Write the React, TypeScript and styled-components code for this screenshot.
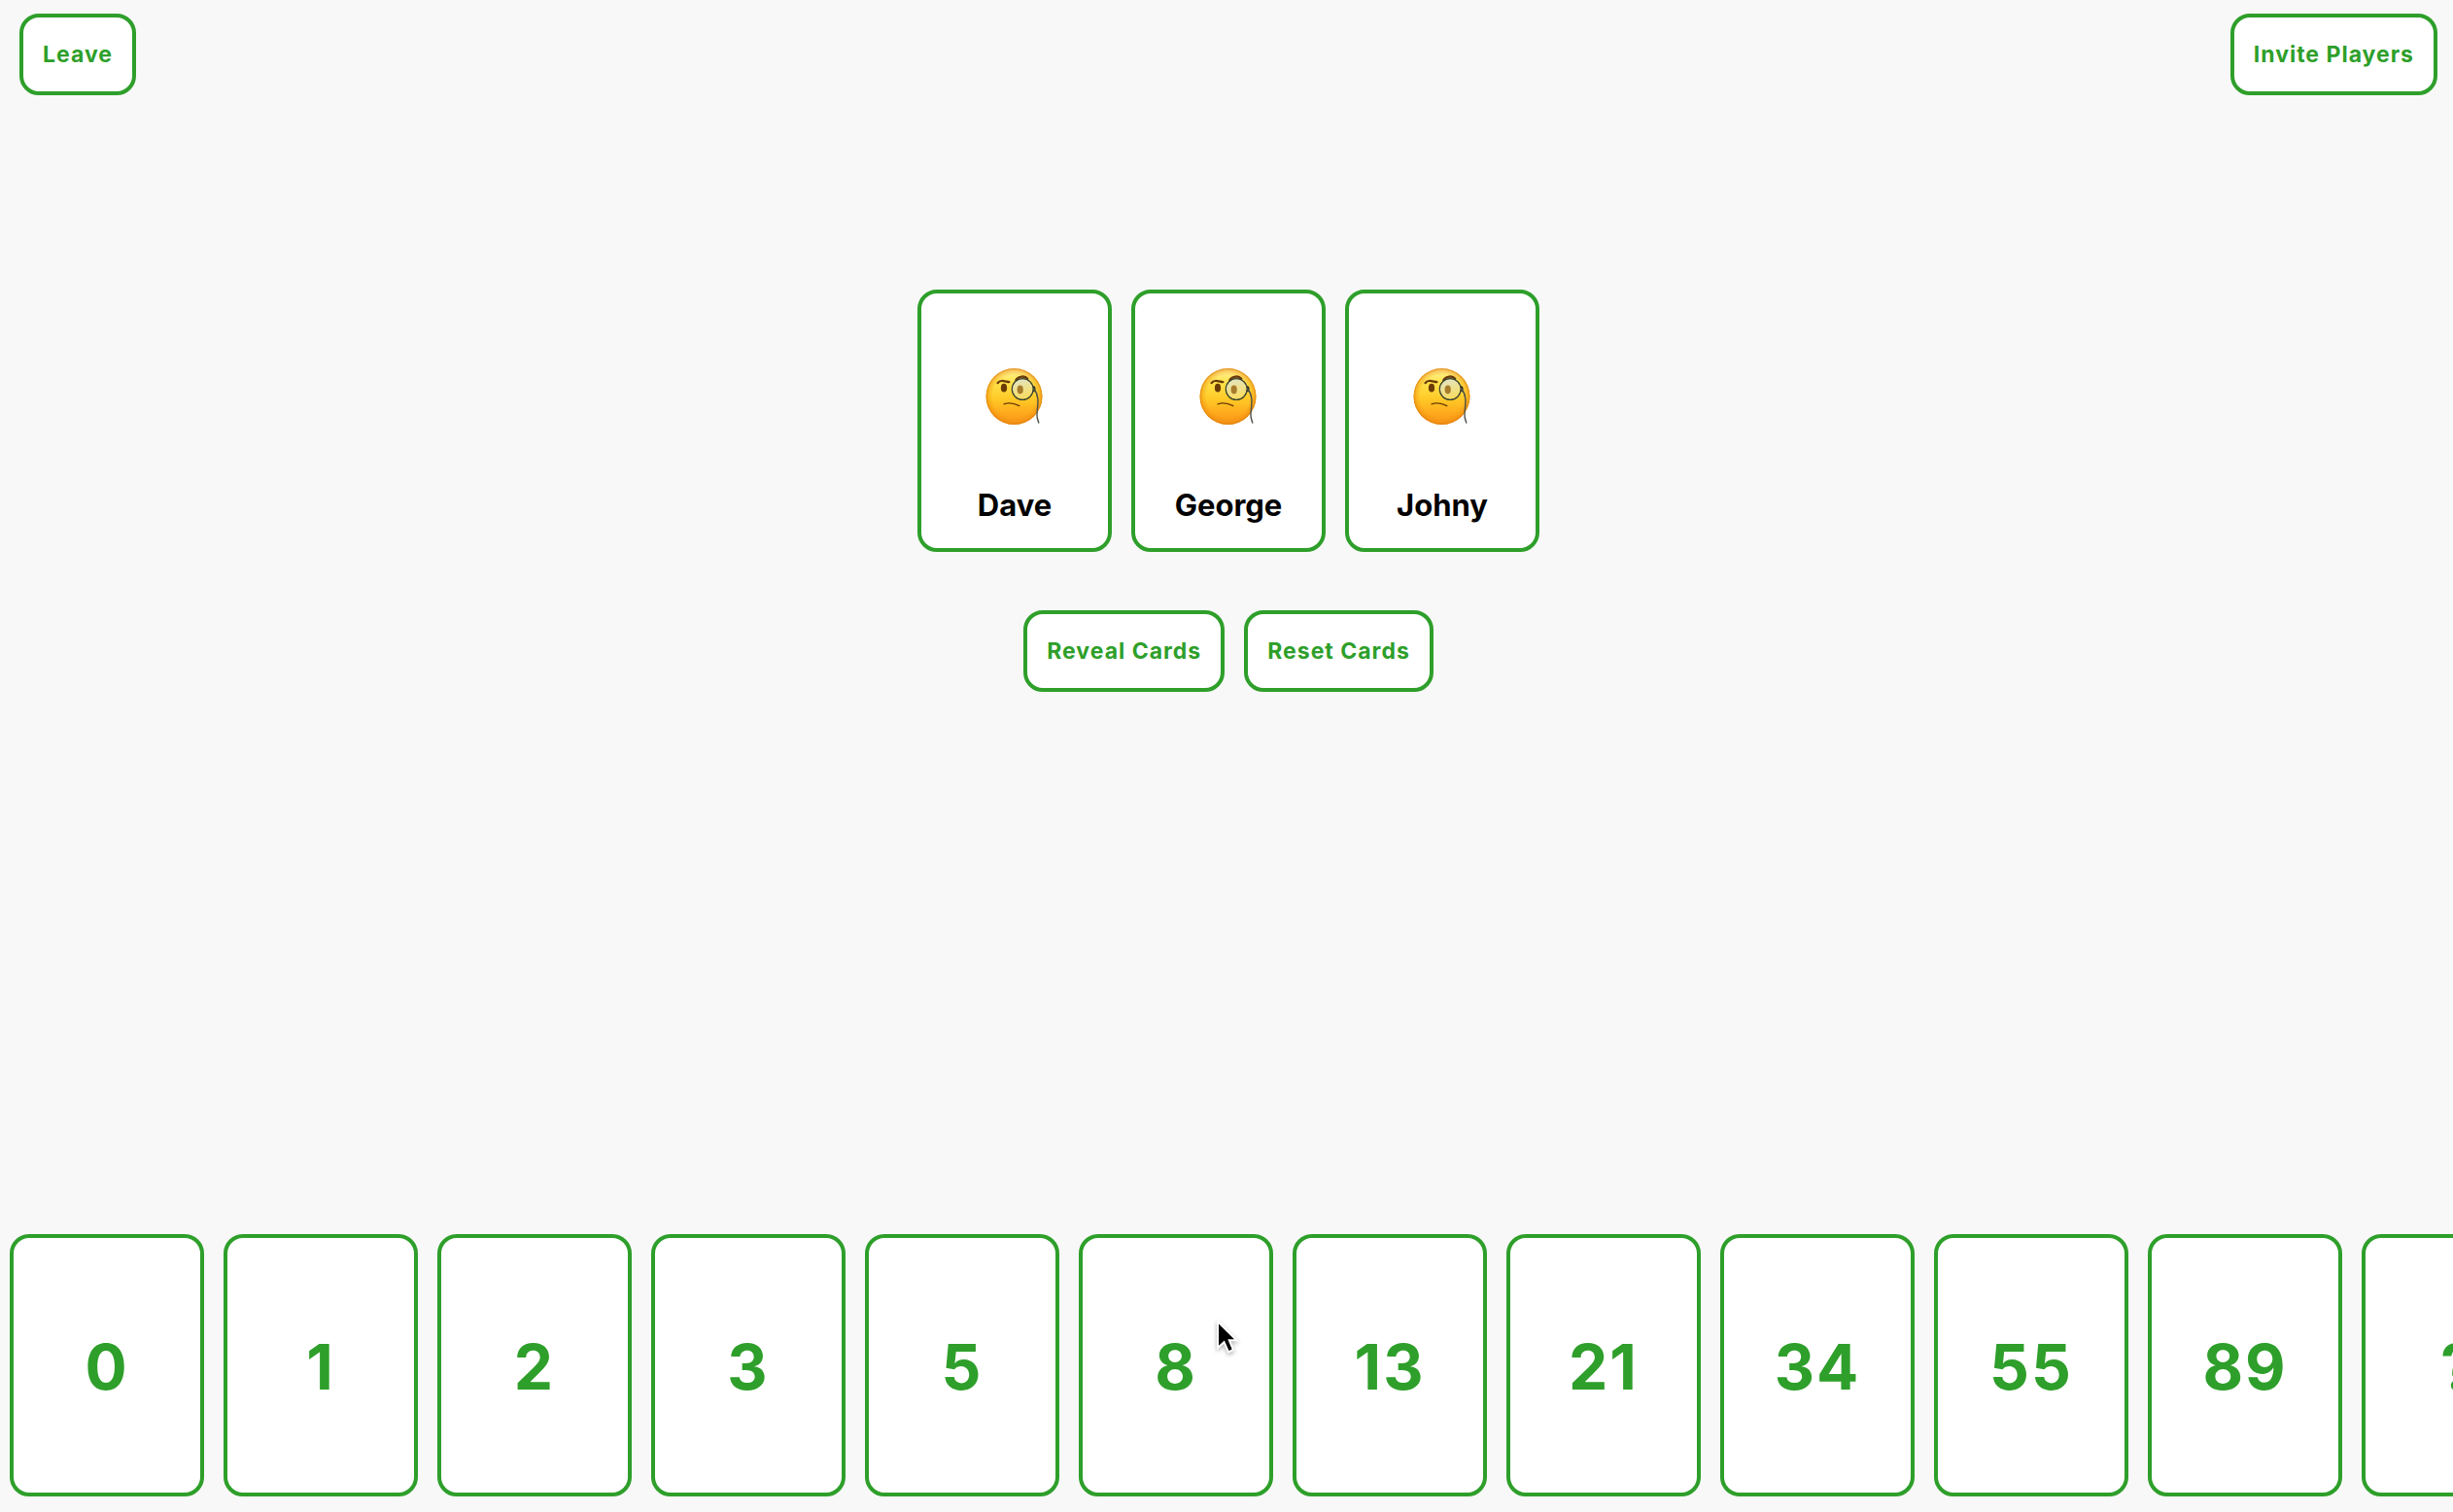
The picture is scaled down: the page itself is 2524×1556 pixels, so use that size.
import React from "react";
import styled, { createGlobalStyle } from "styled-components";

const green = "#2e9f2a";

const GlobalStyle = createGlobalStyle`
  *, *::before, *::after { box-sizing: border-box; }
  body {
    margin: 0;
    background: #f8f8f8;
    font-family: Inter, "Liberation Sans", sans-serif;
  }
`;

const Page = styled.div`
  display: flex;
  flex-direction: column;
  min-height: 100vh;
  overflow: hidden;
`;

const Header = styled.header`
  display: flex;
  justify-content: space-between;
  padding: 14px 16px 0 20px;
`;

const ActionButton = styled.button`
  padding: 20px;
  border: 4px solid ${green};
  border-radius: 20px;
  background: #fff;
  color: ${green};
  font: 700 23px/36px Inter, "Liberation Sans", sans-serif;
  letter-spacing: 1px;
  white-space: nowrap;
  cursor: pointer;
`;

const Table = styled.main`
  flex: 1;
  display: flex;
  flex-direction: column;
  align-items: center;
  gap: 60px;
  padding: 200px 16px 60px 20px;
`;

const Players = styled.ul`
  display: flex;
  flex-wrap: wrap;
  justify-content: center;
  gap: 20px;
  margin: 0;
  padding: 0;
  list-style: none;
`;

const PlayerCard = styled.li`
  display: flex;
  flex-direction: column;
  align-items: center;
  justify-content: flex-end;
  gap: 62px;
  width: 200px;
  height: 270px;
  padding: 24px 20px;
  border: 4px solid ${green};
  border-radius: 20px;
  background: #fff;
`;

const PlayerName = styled.span`
  color: #000;
  font-size: 31px;
  font-weight: 700;
  line-height: 40px;
`;

const Actions = styled.div`
  display: flex;
  gap: 20px;
`;

const Deck = styled.footer`
  display: flex;
  gap: 20px;
  padding: 0 10px 16px;
  overflow-x: auto;
  scrollbar-width: none;
`;

const DeckCard = styled.button`
  position: relative;
  flex: none;
  width: 200px;
  height: 270px;
  padding: 4px 0 0;
  border: 4px solid ${green};
  border-radius: 20px;
  background: #fff;
  color: ${green};
  font: 700 64px/80px Inter, "Liberation Sans", sans-serif;
  letter-spacing: 2px;
  cursor: pointer;
`;

const Pointer = styled.svg`
  position: absolute;
  top: 84px;
  left: 137px;
  overflow: visible;
  filter: drop-shadow(0 2px 2px rgba(0, 0, 0, 0.3));
`;

const MonocleFace = () => (
  <svg width="60" height="60" viewBox="0 0 60 60" role="img" aria-label="Thinking">
    <defs>
      <linearGradient id="skin" x1="0" y1="0" x2="0" y2="1">
        <stop offset="0" stopColor="#fff3a0" />
        <stop offset="0.25" stopColor="#ffe34a" />
        <stop offset="0.55" stopColor="#ffc926" />
        <stop offset="0.85" stopColor="#fda31a" />
        <stop offset="1" stopColor="#f6951b" />
      </linearGradient>
      <radialGradient id="rim">
        <stop offset="0.76" stopColor="#ee8a0c" stopOpacity="0" />
        <stop offset="0.92" stopColor="#ee8a0c" stopOpacity="0.4" />
        <stop offset="1" stopColor="#d97706" stopOpacity="0.85" />
      </radialGradient>
      <linearGradient id="lens" x1="0" y1="0" x2="0.3" y2="1">
        <stop offset="0" stopColor="#dce3d6" stopOpacity="0.95" />
        <stop offset="1" stopColor="#f5e27c" stopOpacity="0.7" />
      </linearGradient>
    </defs>
    <circle cx="29.5" cy="30" r="29" fill="url(#skin)" />
    <circle cx="29.5" cy="30" r="29" fill="url(#rim)" />
    <path d="M12.5 16.2C15.5 12.4 19.2 14.4 24.4 15.2" fill="none" stroke="#68390b" strokeWidth="2.2" strokeLinecap="round" />
    <path d="M31.4 13.2C34 8.9 40.5 8.4 43.2 11.7" fill="none" stroke="#68390b" strokeWidth="2.4" strokeLinecap="round" />
    <ellipse cx="19" cy="21.2" rx="3.1" ry="4.4" fill="#6b3c05" />
    <circle cx="38.2" cy="22.5" r="10.7" fill="url(#lens)" />
    <ellipse cx="35.7" cy="23" rx="3.1" ry="4.4" fill="#a77c2b" />
    <circle cx="38.2" cy="22.5" r="10.9" fill="none" stroke="#37402f" strokeWidth="1.2" />
    <path d="M19 37.8C24 36.2 30 37.2 34.8 39.7" fill="none" stroke="#6b3c05" strokeWidth="1.3" strokeLinecap="round" />
    <path d="M49.2 19.5C51.1 20.8 51 23 49.6 25" fill="none" stroke="#2b302c" strokeWidth="2" />
    <path d="M50 22.5C57 31 52.5 43 53 50C53.2 53 54.2 55 54.8 57" fill="none" stroke="#4c504a" strokeWidth="1.4" strokeLinecap="round" />
  </svg>
);

const MousePointer = () => (
  <Pointer width="24" height="36" viewBox="0 0 24 36" aria-hidden="true">
    <path
      d="M2 2V29L8.5 23.2L13 33.3L18 31L13.8 21.2H21.5Z"
      fill="#000"
      stroke="#fff"
      strokeWidth="2"
    />
  </Pointer>
);

const players = ["Dave", "George", "Johny"];
const values = ["0", "1", "2", "3", "5", "8", "13", "21", "34", "55", "89", "?"];
const hovered = "8";

export default function App() {
  return (
    <>
      <GlobalStyle />
      <Page>
        <Header>
          <ActionButton type="button">Leave</ActionButton>
          <ActionButton type="button">Invite Players</ActionButton>
        </Header>
        <Table>
          <Players>
            {players.map((name) => (
              <PlayerCard key={name}>
                <MonocleFace />
                <PlayerName>{name}</PlayerName>
              </PlayerCard>
            ))}
          </Players>
          <Actions>
            <ActionButton type="button">Reveal Cards</ActionButton>
            <ActionButton type="button">Reset Cards</ActionButton>
          </Actions>
        </Table>
        <Deck>
          {values.map((value) => (
            <DeckCard key={value} type="button">
              {value}
              {value === hovered && <MousePointer />}
            </DeckCard>
          ))}
        </Deck>
      </Page>
    </>
  );
}
